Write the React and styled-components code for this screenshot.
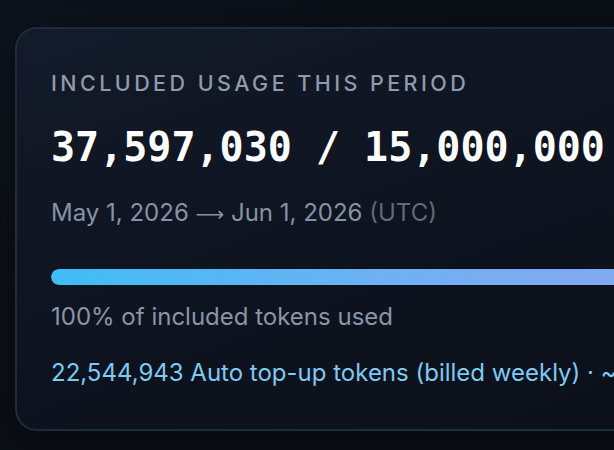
import React from "react";
import styled, { createGlobalStyle } from "styled-components";

const GlobalStyle = createGlobalStyle`
  html, body {
    margin: 0;
    padding: 0;
    background: #0a0e15;
    overflow: hidden;
  }
  body {
    font-family: Inter, "Noto Sans", sans-serif;
    -webkit-font-smoothing: antialiased;
  }
`;

const Page = styled.div`
  width: 614px;
  height: 450px;
  padding: 27px 0 0 15px;
  box-sizing: border-box;
  background: radial-gradient(circle at 0 0, #0d131c 0%, #0a0e15 60%);
`;

const Card = styled.section`
  width: 760px;
  height: 404px;
  box-sizing: border-box;
  padding: 41px 34px 0 34px;
  border: 2px solid #1c2e3e;
  border-radius: 22px;
  background: linear-gradient(160deg, #131a29 0%, #0e1420 45%, #0b0f18 100%);
  box-shadow: 0 0 0 1px rgba(10, 14, 21, 0.6), 0 10px 30px rgba(0, 0, 0, 0.35);
`;

const Label = styled.div`
  font-size: 21.5px;
  font-weight: 500;
  letter-spacing: 0.16em;
  text-transform: uppercase;
  color: #8f9aad;
  line-height: 26px;
`;

const Total = styled.div`
  margin-top: 27px;
  font-family: "DejaVu Sans Mono", monospace;
  font-weight: 700;
  font-size: 40px;
  line-height: 48px;
  color: #ffffff;
  white-space: nowrap;
`;

const Period = styled.div`
  margin-top: 27px;
  height: 30px;
  font-size: 24px;
  line-height: 30px;
  color: #8792a5;
  white-space: nowrap;
`;

const Arrow = styled.span`
  font-family: "DejaVu Sans", sans-serif;
  font-size: 20px;
  line-height: 1;
`;

const Zone = styled.span`
  color: #5f6a7c;
`;

const Track = styled.div`
  margin-top: 41px;
  height: 16px;
  border-radius: 8px;
  background: #1b2433;
  overflow: hidden;
`;

const Fill = styled.div`
  height: 100%;
  border-radius: 8px;
  background: linear-gradient(90deg, #3fbdf5 0%, #6fb0f4 50%, #8da4f2 100%);
`;

const Note = styled.div`
  margin-top: ${(p) => p.$gap}px;
  font-size: 24px;
  line-height: 30px;
  color: ${(p) => (p.$accent ? "#7dcaf3" : "#8a95a6")};
  white-space: nowrap;
`;

export default function App() {
  const used = 100;
  return (
    <>
      <GlobalStyle />
      <Page>
        <Card>
          <Label>Included usage this period</Label>
          <Total>37,597,030 / 15,000,000</Total>
          <Period>
            May 1, 2026 <Arrow>⟶</Arrow> Jun 1, 2026 <Zone>(UTC)</Zone>
          </Period>
          <Track>
            <Fill style={{ width: `${used}%` }} />
          </Track>
          <Note $gap={17}>100% of included tokens used</Note>
          <Note $gap={26} $accent>
            22,544,943 Auto top-up tokens (billed weekly) · ~
          </Note>
        </Card>
      </Page>
    </>
  );
}
